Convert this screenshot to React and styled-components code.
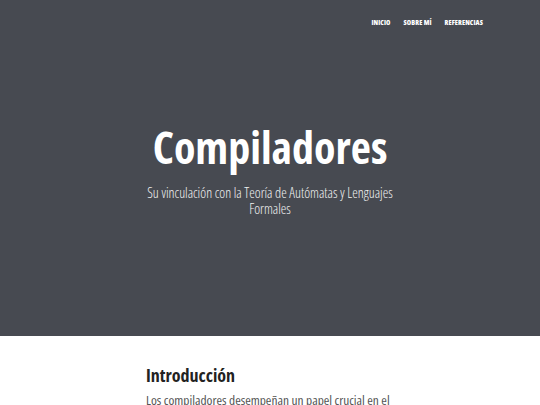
import React from 'react';
import styled, { createGlobalStyle } from 'styled-components';

const GlobalStyle = createGlobalStyle`
    html, body {
        margin: 0;
        padding: 0;
        background: #ffffff;
        font-family: "Open Sans", "Liberation Sans", sans-serif;
        font-stretch: 75%;
    }
`;

const Hero = styled.header`
    background-color: #474a51;
    height: 336px;
    display: flex;
    flex-direction: column;
`;

const Nav = styled.nav`
    display: flex;
    justify-content: flex-end;
    gap: 13px;
    height: 40px;
    align-items: center;
    padding: 4px 57px 0 0;
    box-sizing: border-box;
`;

const NavLink = styled.a`
    color: #ffffff;
    font-size: 7px;
    font-weight: 800;
    letter-spacing: 0.1px;
    text-transform: uppercase;
    text-decoration: none;
`;

const HeroText = styled.div`
    display: flex;
    flex-direction: column;
    align-items: center;
    margin-top: 81px;
    color: #ffffff;
    text-align: center;
`;

const Title = styled.h1`
    margin: 0;
    font-size: 44px;
    font-weight: 700;
    line-height: 1.2;
`;

const Subtitle = styled.h2`
    margin: 11px 0 0 0;
    max-width: 250px;
    font-size: 14px;
    font-weight: 300;
    line-height: 16px;
    color: #f2f2f2;
`;

const Content = styled.main`
    width: 250px;
    margin: 0 auto;
    padding: 29px 0 0 1px;
    box-sizing: border-box;
`;

const SectionTitle = styled.h2`
    margin: 0 0 3px 0;
    font-size: 18px;
    font-weight: 700;
    line-height: 1.2;
    color: #222222;
`;

const Paragraph = styled.p`
    margin: 0;
    font-size: 13.4px;
    font-weight: 400;
    color: #555555;
    line-height: 1.55;
`;

const App = () => {
    return (
        <>
            <GlobalStyle />
            <Hero>
                <Nav>
                    <NavLink href="#">Inicio</NavLink>
                    <NavLink href="#">Sobre mí</NavLink>
                    <NavLink href="#">Referencias</NavLink>
                </Nav>
                <HeroText>
                    <Title>Compiladores</Title>
                    <Subtitle>Su vinculación con la Teoría de Autómatas y Lenguajes Formales</Subtitle>
                </HeroText>
            </Hero>
            <Content>
                <SectionTitle>Introducción</SectionTitle>
                <Paragraph>Los compiladores desempeñan un papel crucial en el desarrollo de software.</Paragraph>
            </Content>
        </>
    );
};

export default App;
